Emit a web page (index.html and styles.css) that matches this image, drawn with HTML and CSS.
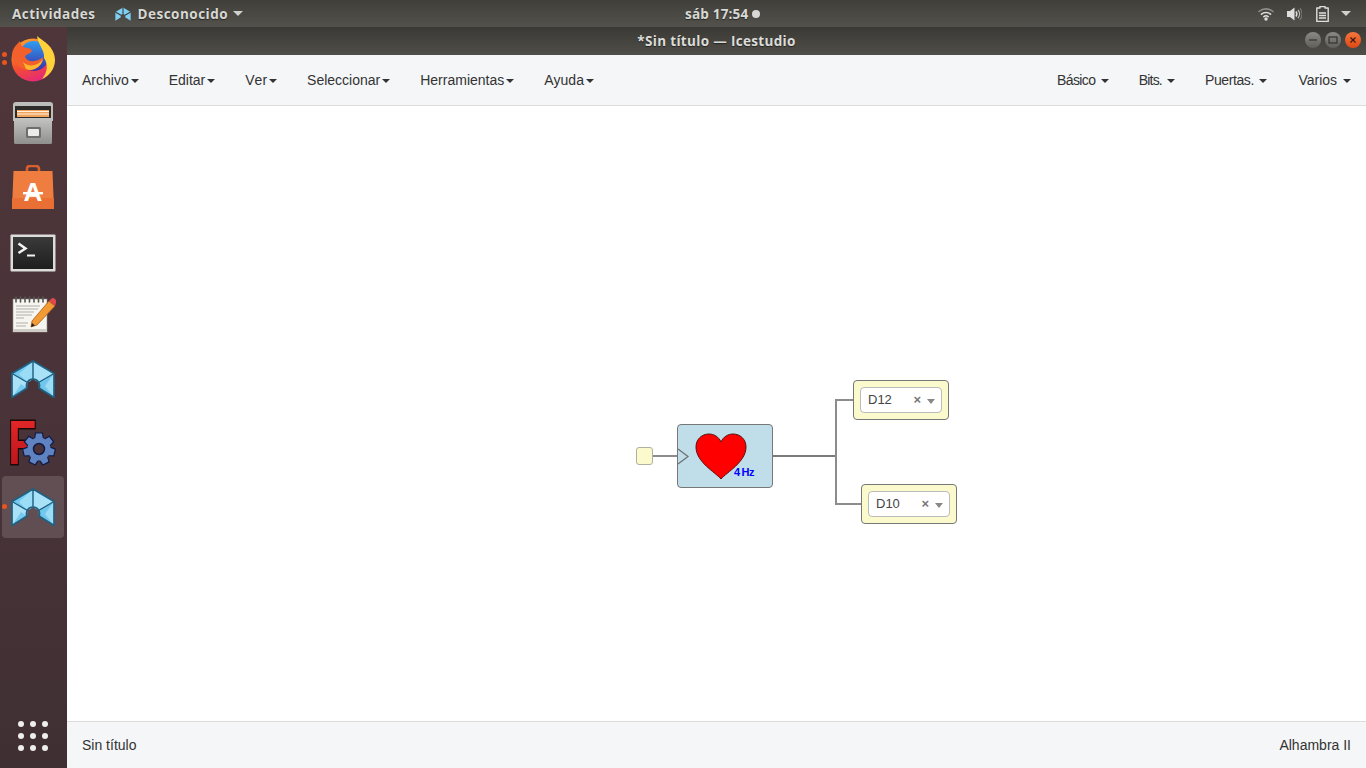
FILE: index.html
```html
<!DOCTYPE html>
<html lang="es">
<head>
    <meta charset="UTF-8">
    <title>*Sin título — Icestudio</title>
    <link rel="stylesheet" href="styles.css">
</head>
<body>
    <svg class="defs" width="0" height="0">
        <defs>
            <linearGradient id="ff-glow" x1="0.2" y1="0" x2="0.6" y2="1">
                <stop offset="0" stop-color="#ffa52e"/>
                <stop offset="0.55" stop-color="#f4502c"/>
                <stop offset="1" stop-color="#e5287a"/>
            </linearGradient>
            <linearGradient id="ff-blue" x1="0" y1="0" x2="0" y2="1">
                <stop offset="0" stop-color="#2f9df0"/>
                <stop offset="1" stop-color="#3b2fa8"/>
            </linearGradient>
            <linearGradient id="drawer-body" x1="0" y1="0" x2="0" y2="1">
                <stop offset="0" stop-color="#c4c4c2"/>
                <stop offset="1" stop-color="#8f8f8d"/>
            </linearGradient>
            <linearGradient id="term-bg" x1="0" y1="0" x2="0" y2="1">
                <stop offset="0" stop-color="#3a3a3a"/>
                <stop offset="1" stop-color="#1e1e1e"/>
            </linearGradient>
            <linearGradient id="f-red" x1="0" y1="0" x2="0" y2="1">
                <stop offset="0" stop-color="#ee2b2b"/>
                <stop offset="1" stop-color="#b01218"/>
            </linearGradient>
            <symbol id="ice-logo" viewBox="0 0 44 38">
                <path d="M22 1 43 13.500V37.500L28 28A6.500 6.500 0 1 0 16 28L1 37.500V13.500Z" fill="#8ad4f2"/>
                <path d="M22 1V19L16.500 22.500 1 13.500Z" fill="#74c8ee"/>
                <path d="M22 1 8 14 16.500 22.500 22 19Z" fill="#9bdcf6"/>
                <path d="M22 1V19L27.500 22.500 43 13.500Z" fill="#a9e2f7"/>
                <path d="M1 13.500 16.500 22.500 16 28 1 37.500Z" fill="#a9e2f7"/>
                <path d="M1 37.500 10 24 16 28Z" fill="#78cbee"/>
                <path d="M43 13.500 27.500 22.500 28 28 43 37.500Z" fill="#72c7ec"/>
                <path d="M43 13.500 34 26 43 37.500Z" fill="#9ddcf5"/>
                <path d="M22 1 43 13.500V37.500L28 28A6.500 6.500 0 1 0 16 28L1 37.500V13.500Z" fill="none" stroke="#1f5f80" stroke-width="1.700" stroke-linejoin="round"/>
                <path d="M22 1V19M1 13.500 16.500 22.500M43 13.500 27.500 22.500" fill="none" stroke="#1f5f80" stroke-width="1.400"/>
            </symbol>
        </defs>
    </svg>

    <!-- barra superior del escritorio -->
    <header class="top-bar">
        <div class="top-left">
            <span class="top-label wide">Actividades</span>
            <svg class="app-mini" width="16" height="14" viewBox="0 0 44 38"><path d="M22 1 43 13.500V37.500L28 28A6.500 6.500 0 1 0 16 28L1 37.500V13.500Z" fill="#7fd0f5"/><path d="M22 1V19M1 13.500 16.500 22.500M43 13.500 27.500 22.500" fill="none" stroke="#3d3c38" stroke-width="3"/></svg>
            <span class="top-label wide app-name">Desconocido</span>
            <span class="arrow"></span>
        </div>
        <div class="top-clock">
            <span class="top-label">sáb 17:54</span>
            <span class="clock-dot"></span>
        </div>
        <div class="top-right">
            <svg width="16" height="14" viewBox="0 0 16 14" fill="none" stroke-linecap="round">
                <path d="M1 4.500C5 1 11 1 15 4.500" stroke="#8e8d88" stroke-width="1.600"/>
                <path d="M3.500 7.200C6 5 10 5 12.500 7.200" stroke="#dedede" stroke-width="1.600"/>
                <path d="M5.800 9.600C7 8.700 9 8.700 10.200 9.600" stroke="#dedede" stroke-width="1.600"/>
                <circle cx="8" cy="12" r="1.700" fill="#dedede"/>
            </svg>
            <svg class="tray-vol" width="16" height="14" viewBox="0 0 16 14" fill="none">
                <path d="M1 4H4L8.500 .5V13.500L4 10H1Z" fill="#dedede"/>
                <path d="M10 4.500C11 6 11 8 10 9.500" stroke="#dedede" stroke-width="1.500"/>
                <path d="M12 2.800C14 5.200 14 8.800 12 11.200" stroke="#bdbcb8" stroke-width="1.300"/>
                <path d="M14 1.200C16.400 4.600 16.400 9.400 14 12.800" stroke="#77766f" stroke-width="1.200"/>
            </svg>
            <svg width="13" height="16" viewBox="0 0 13 16" fill="none">
                <path d="M4 .5H9V2H12.200V15.400H.8V2H4Z" stroke="#dedede" stroke-width="1.400" stroke-linejoin="round"/>
                <path d="M3 7H10M3 9.500H10M3 12H10" stroke="#dedede" stroke-width="1.500"/>
            </svg>
            <span class="arrow"></span>
        </div>
    </header>

    <div class="desktop">
        <!-- lanzador lateral -->
        <nav class="dock">
            <div class="dock-item">
                <span class="run-dot run-dot-a"></span>
                <span class="run-dot run-dot-b"></span>
                <svg width="46" height="46" viewBox="0 0 46 46">
                    <circle cx="23" cy="24" r="21.500" fill="url(#ff-glow)"/>
                    <circle cx="24" cy="20" r="15" fill="url(#ff-blue)"/>
                    <path d="M27 0C33 5 45 11 45 24 45 33 39 40 32 43 38 36 38 28 34 22 35 14 28 9 27 0Z" fill="#ffd23c"/>
                    <path d="M2 18C3 12 6 9 10 5 10 9 13 12 18 12 22 13 23 15 20 17 18 18 15 19 15 21 18 27 28 26 33 21 33 31 22 36 14 33 6 31 2 25 2 18Z" fill="#f3602b"/>
                    <path d="M13 26C18 31 27 31 33 23 31 32 22 36 16 33Z" fill="#ffb52e"/>
                </svg>
            </div>
            <div class="dock-item">
                <svg width="42" height="44" viewBox="0 0 42 44">
                    <path d="M1 4Q1 1 4 1H38Q41 1 41 4V20H1Z" fill="#bdbdbb"/>
                    <rect x="3" y="5" width="36" height="14" fill="#2e2c2a"/>
                    <rect x="5" y="9" width="32" height="7" fill="#f0a35c"/>
                    <path d="M5 10.500H37M5 13H37" stroke="#fff3e0" stroke-width="1"/>
                    <rect x="2" y="17" width="38" height="26" rx="1.500" fill="url(#drawer-body)"/>
                    <rect x="14" y="26" width="15" height="11" rx="1.500" fill="#6f6f6d"/>
                    <rect x="16" y="28" width="11" height="7" rx="1" fill="#ececea"/>
                </svg>
            </div>
            <div class="dock-item">
                <svg width="42" height="44" viewBox="0 0 42 44">
                    <path d="M15 12V4Q15 1 18 1H24Q27 1 27 4V12" fill="none" stroke="#d9602c" stroke-width="2.600"/>
                    <path d="M1.500 6H40.500L42 44H0Z" fill="#ef7d3f"/>
                    <rect x="0" y="33" width="42" height="11" fill="#e96f35"/>
                    <text x="21" y="36" class="bag-letter" text-anchor="middle">A</text>
                    <rect x="11" y="27" width="20" height="2.400" fill="#fff"/>
                </svg>
            </div>
            <div class="dock-item">
                <svg width="46" height="42" viewBox="0 -4 46 42">
                    <rect x=".5" y=".5" width="45" height="37" rx="1" fill="#dcdcda"/>
                    <rect x="3" y="3" width="40" height="32" fill="url(#term-bg)"/>
                    <path d="M8.500 9.500 15.500 14.500 8.500 19" fill="none" stroke="#f2f2f2" stroke-width="2.500"/>
                    <path d="M17 21.500H25" stroke="#f2f2f2" stroke-width="2"/>
                </svg>
            </div>
            <div class="dock-item">
                <svg width="46" height="38" viewBox="0 0 46 38">
                    <rect x="3" y="3" width="34" height="33" fill="#f6f5ef" stroke="#8e8d88" stroke-width=".6"/>
                    <rect x="3" y="33" width="34" height="3" fill="#cfcdc6"/>
                    <path d="M6 1V6M10.500 1V6M15 1V6M19.500 1V6M24 1V6M28.500 1V6M33 1V6" stroke="#555" stroke-width="1.600" stroke-linecap="round"/>
                    <path d="M6 10H30M6 13H28M6 16H24M6 19H22M6 22H14M6 27H18M6 30H16" stroke="#b0afaa" stroke-width="1"/>
                    <path d="M39 5 45 10 27 29 21 31 22 25Z" fill="#f29a33" stroke="#a65c16" stroke-width=".8"/>
                    <path d="M39 5 41 3Q43 1 45 3L46.500 5 45 10Z" fill="#e0484c"/>
                    <path d="M21 31 22 27 25 29.500Z" fill="#222"/>
                </svg>
            </div>
            <div class="dock-item">
                <svg width="44" height="38"><use href="#ice-logo"/></svg>
            </div>
            <div class="dock-item">
                <svg class="freecad" width="46" height="46" viewBox="0 0 46 46">
                    <text transform="translate(-2 44) scale(0.75 1)" class="freecad-letter">F</text>
                    <g transform="translate(29 29)">
                        <path id="gear-tooth" d="M-3.500 -16H3.500L4.500 -10H-4.500Z" fill="#5f82c0" stroke="#111a46" stroke-width="1.200"/>
                        <use href="#gear-tooth" transform="rotate(51.400)"/>
                        <use href="#gear-tooth" transform="rotate(102.800)"/>
                        <use href="#gear-tooth" transform="rotate(154.300)"/>
                        <use href="#gear-tooth" transform="rotate(205.700)"/>
                        <use href="#gear-tooth" transform="rotate(257.100)"/>
                        <use href="#gear-tooth" transform="rotate(308.600)"/>
                        <circle r="11.500" fill="#5f82c0"/>
                        <circle r="5.500" fill="#4a3237" stroke="#111a46" stroke-width="1.500"/>
                    </g>
                </svg>
            </div>
            <div class="dock-item active">
                <span class="run-dot run-dot-c"></span>
                <svg width="44" height="38"><use href="#ice-logo"/></svg>
            </div>
            <div class="apps-grid">
                <span></span><span></span><span></span>
                <span></span><span></span><span></span>
                <span></span><span></span><span></span>
            </div>
        </nav>

        <div class="window">
            <div class="title-bar">
                <span class="title-text">*Sin título — Icestudio</span>
                <div class="win-buttons">
                    <span class="win-btn"><svg width="10" height="10"><path d="M1 5H9" stroke="#333" stroke-width="1.200"/></svg></span>
                    <span class="win-btn"><svg width="10" height="10"><rect x="1" y="2" width="8" height="6" fill="none" stroke="#333" stroke-width="1.200"/></svg></span>
                    <span class="win-btn close"><svg width="10" height="10"><path d="M2.500 2.500 7.500 7.500M7.500 2.500 2.500 7.500" stroke="#3a1a0c" stroke-width="1.200"/></svg></span>
                </div>
            </div>

            <!-- menu principal -->
            <div class="menu-bar">
                <ul class="menu menu-main">
                    <li>Archivo<span class="caret"></span></li>
                    <li>Editar<span class="caret"></span></li>
                    <li>Ver<span class="caret"></span></li>
                    <li>Seleccionar<span class="caret"></span></li>
                    <li>Herramientas<span class="caret"></span></li>
                    <li>Ayuda<span class="caret"></span></li>
                </ul>
                <ul class="menu menu-blocks">
                    <li class="menu-basic">Básico <span class="caret"></span></li>
                    <li class="menu-bits">Bits. <span class="caret"></span></li>
                    <li class="menu-gates">Puertas. <span class="caret"></span></li>
                    <li class="menu-misc">Varios <span class="caret"></span></li>
                </ul>
            </div>

            <!-- lienzo con el circuito -->
            <main class="canvas">
                <svg class="wires" width="1299" height="615" fill="none">
                    <path class="wire-thin" d="M586 350H610"/>
                    <path class="wire" d="M706 350H769"/>
                    <path class="wire-thin" d="M769 350V294H786M769 350V398H794"/>
                </svg>
                <div class="node-port"></div>
                <div class="node-block">
                    <svg class="clock-mark" width="11" height="17"><path d="M0 1 10 8.500 0 16" fill="none" stroke="#6d6d6d" stroke-width="1.200"/></svg>
                    <svg class="heart" width="52" height="47" viewBox="0 0 52 47"><path d="M26 46C20 39 1 29 1 14 1 6 7 1 14 1 19 1 24 4 26 9 28 4 33 1 38 1 45 1 51 6 51 14 51 29 32 39 26 46Z" fill="#f00" stroke="#5a1010" stroke-width="1"/></svg>
                    <span class="hz">4 Hz</span>
                </div>
                <div class="node-pin pin-d12">
                    <div class="pin-select">
                        <span class="pin-name">D12</span>
                        <span class="pin-clear">×</span>
                        <span class="pin-arrow"></span>
                    </div>
                </div>
                <div class="node-pin pin-d10">
                    <div class="pin-select">
                        <span class="pin-name">D10</span>
                        <span class="pin-clear">×</span>
                        <span class="pin-arrow"></span>
                    </div>
                </div>
            </main>

            <footer class="status-bar">
                <span>Sin título</span>
                <span>Alhambra II</span>
            </footer>
        </div>
    </div>
</body>
</html>
```

FILE: styles.css
```css
html, body {
    height: 100%;
}
body {
    margin: 0;
    overflow: hidden;
    display: flex;
    flex-direction: column;
    font-family: "Liberation Sans", Arial, sans-serif;
    font-size: 14px;
    color: #333;
    background-color: #fff;
}
.defs {
    position: absolute;
}

/* barra superior */
.top-bar {
    height: 27px;
    flex-shrink: 0;
    display: flex;
    align-items: center;
    justify-content: space-between;
    position: relative;
    background: linear-gradient(#403f3a, #53514b);
    color: #d8d8d4;
}
.top-label {
    font-family: "Open Sans", sans-serif;
    font-weight: 700;
    font-size: 13.5px;
    letter-spacing: 0.2px;
    text-shadow: 0 1px 1px rgba(0, 0, 0, 0.5);
}
.top-label.wide {
    letter-spacing: 0.5px;
}
.top-left {
    display: flex;
    align-items: center;
    padding-left: 12px;
}
.app-mini {
    margin-left: 20px;
}
.app-name {
    margin-left: 6px;
}
.arrow {
    width: 0;
    height: 0;
    margin-left: 5px;
    border-left: 5px solid transparent;
    border-right: 5px solid transparent;
    border-top: 5px solid #d0d0cc;
}
.top-clock {
    position: absolute;
    left: 685px;
    top: 0;
    height: 27px;
    display: flex;
    align-items: center;
}
.clock-dot {
    width: 8px;
    height: 8px;
    margin-left: 4px;
    border-radius: 50%;
    background-color: #d8d8d4;
}
.top-right {
    display: flex;
    align-items: center;
    gap: 12px;
    padding-right: 15px;
}
.top-right .arrow {
    margin-left: 0;
}
.tray-vol {
    margin-right: 2px;
}

.desktop {
    flex: 1;
    min-height: 0;
    display: flex;
}

/* lanzador */
.dock {
    width: 67px;
    flex-shrink: 0;
    display: flex;
    flex-direction: column;
    padding-top: 1px;
    box-sizing: border-box;
    background: linear-gradient(#4f363a, #483338 60%, #3f2f33);
}
.dock-item {
    position: relative;
    height: 62px;
    margin: 0 3px 2px 2px;
    border-radius: 4px;
    display: flex;
    align-items: center;
    justify-content: center;
}
.dock-item.active {
    background-color: rgba(255, 255, 255, 0.14);
}
.run-dot {
    position: absolute;
    left: 0;
    width: 5px;
    height: 5px;
    border-radius: 50%;
    background-color: #e9541f;
}
.run-dot-a {
    top: 24px;
}
.run-dot-b {
    top: 32px;
}
.run-dot-c {
    top: 28px;
}
.bag-letter {
    font-family: "Liberation Sans", sans-serif;
    font-weight: 700;
    font-size: 26px;
    fill: #fff;
}
.freecad {
    overflow: visible;
}
.freecad-letter {
    font-family: "Liberation Sans", sans-serif;
    font-weight: 700;
    font-size: 62px;
    fill: url(#f-red);
    stroke: #1d0808;
    stroke-width: 3px;
    paint-order: stroke;
}
.apps-grid {
    margin-top: auto;
    margin-bottom: 17px;
    padding-left: 18px;
    display: grid;
    grid-template-columns: repeat(3, 6px);
    gap: 6px;
}
.apps-grid span {
    width: 6px;
    height: 6px;
    border-radius: 50%;
    background-color: #eee;
}

/* ventana */
.window {
    flex: 1;
    min-width: 0;
    display: flex;
    flex-direction: column;
}
.title-bar {
    height: 28px;
    flex-shrink: 0;
    position: relative;
    display: flex;
    align-items: center;
    justify-content: center;
    background: linear-gradient(#3a3935, #4f4e48);
}
.title-text {
    font-family: "Open Sans", sans-serif;
    font-weight: 700;
    font-size: 13.5px;
    letter-spacing: 0.33px;
    color: #dcdcd8;
    text-shadow: 0 1px 1px rgba(0, 0, 0, 0.5);
}
.win-buttons {
    position: absolute;
    right: 5px;
    top: 5px;
    display: flex;
    gap: 4px;
}
.win-btn {
    width: 16px;
    height: 16px;
    border-radius: 50%;
    display: flex;
    align-items: center;
    justify-content: center;
    background: linear-gradient(#8a8983, #5f5e59);
}
.win-btn.close {
    background: linear-gradient(#f4763f, #dd4814);
}

/* menu */
.menu-bar {
    height: 50px;
    flex-shrink: 0;
    display: flex;
    justify-content: space-between;
    background-color: #f5f6f8;
    border-bottom: 1px solid #dcdcdc;
}
.menu {
    display: flex;
    margin: 0;
    padding: 0;
    list-style: none;
}
.menu li {
    padding: 0 15px;
    line-height: 50px;
    cursor: pointer;
}
.menu-main {
    font-kerning: none;
}
.menu-basic {
    letter-spacing: -0.6px;
}
.menu-bits {
    letter-spacing: -0.8px;
}
.menu-gates {
    letter-spacing: -0.4px;
}
.menu li.menu-misc {
    padding-left: 16px;
}
.caret {
    display: inline-block;
    width: 0;
    height: 0;
    margin-left: 2px;
    vertical-align: middle;
    border-left: 4px solid transparent;
    border-right: 4px solid transparent;
    border-top: 4px solid #333;
}

/* lienzo */
.canvas {
    flex: 1;
    min-height: 0;
    position: relative;
    background-color: #fff;
}
.wires {
    position: absolute;
    left: 0;
    top: 0;
}
.wire {
    stroke: #7c7c7c;
    stroke-width: 2px;
}
.wire-thin {
    stroke: #8c8c8c;
    stroke-width: 2px;
}
.node-port {
    position: absolute;
    left: 569px;
    top: 341px;
    width: 15px;
    height: 16px;
    border: 1px solid #b0b0a0;
    border-radius: 3px;
    background-color: #fbfacd;
}
.node-block {
    position: absolute;
    left: 610px;
    top: 318px;
    width: 94px;
    height: 62px;
    border: 1px solid #777;
    border-radius: 4px;
    background-color: #bfdeea;
}
.clock-mark {
    position: absolute;
    left: 0;
    top: 23px;
}
.heart {
    position: absolute;
    left: 17px;
    top: 8px;
}
.hz {
    position: absolute;
    left: 56px;
    top: 41px;
    font-size: 11px;
    font-weight: 700;
    letter-spacing: -0.4px;
    word-spacing: -0.8px;
    color: #00f;
}
.node-pin {
    position: absolute;
    padding: 6px;
    width: 82px;
    height: 26px;
    border: 1px solid #777;
    border-radius: 4px;
    background-color: #fbfacd;
}
.pin-d12 {
    left: 786px;
    top: 274px;
}
.pin-d10 {
    left: 794px;
    top: 378px;
}
.pin-select {
    height: 100%;
    box-sizing: border-box;
    display: flex;
    align-items: center;
    padding: 0 6px 2px 7px;
    border: 1px solid #bbb;
    border-radius: 4px;
    background-color: #fff;
    font-size: 13px;
    color: #444;
}
.pin-name {
    flex: 1;
}
.pin-clear {
    font-weight: 700;
    color: #777;
    margin-right: 1px;
}
.pin-arrow {
    width: 0;
    height: 0;
    margin: 5px 0 0 5px;
    border-left: 4px solid transparent;
    border-right: 4px solid transparent;
    border-top: 5px solid #888;
}

/* barra de estado */
.status-bar {
    height: 46px;
    flex-shrink: 0;
    display: flex;
    align-items: center;
    justify-content: space-between;
    padding: 0 15px;
    background-color: #f5f6f8;
    border-top: 1px solid #dcdcdc;
}
```
